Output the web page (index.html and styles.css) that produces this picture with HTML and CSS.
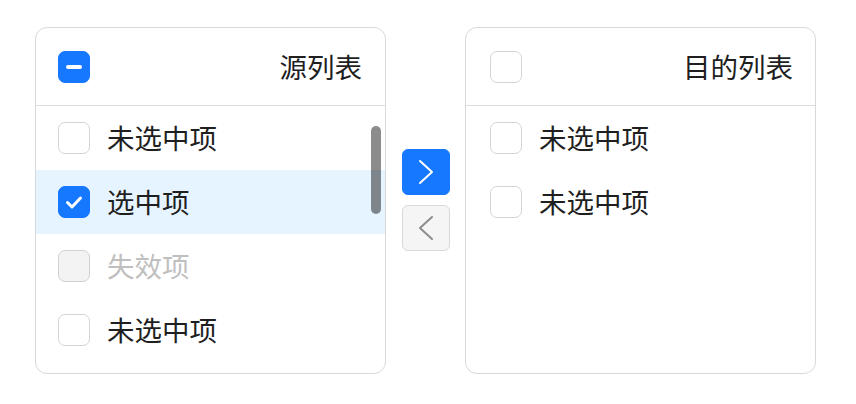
FILE: index.html
```html
<!DOCTYPE html>
<html lang="zh">
<head>
<meta charset="utf-8">
<link rel="stylesheet" href="styles.css">
</head>
<body>
<div class="transfer">
  <div class="panel">
    <div class="header">
      <span class="cb cb-ind"><span class="bar"></span></span>
      <span class="title">源列表</span>
    </div>
    <div class="list">
      <div class="item"><span class="cb"></span><span class="label">未选中项</span></div>
      <div class="item selected"><span class="cb cb-checked"><svg viewBox="0 0 32 32" width="32" height="32"><path d="M9.5 16.5 L14 21 L22.5 12" fill="none" stroke="#fff" stroke-width="3" stroke-linecap="round" stroke-linejoin="round"/></svg></span><span class="label">选中项</span></div>
      <div class="item disabled"><span class="cb cb-disabled"></span><span class="label">失效项</span></div>
      <div class="item"><span class="cb"></span><span class="label">未选中项</span></div>
      <div class="thumb"></div>
    </div>
  </div>
  <div class="ops">
    <button class="op op-primary"><svg viewBox="0 0 48 46" width="48" height="46"><path d="M18 12 L30 23 L18 34" fill="none" stroke="#fff" stroke-width="2" stroke-linecap="round" stroke-linejoin="round"/></svg></button>
    <button class="op op-disabled"><svg viewBox="0 0 48 46" width="48" height="46"><path d="M30 12 L18 23 L30 34" fill="none" stroke="#8c8c8c" stroke-width="2" stroke-linecap="round" stroke-linejoin="round"/></svg></button>
  </div>
  <div class="panel panel-right">
    <div class="header">
      <span class="cb"></span>
      <span class="title">目的列表</span>
    </div>
    <div class="list">
      <div class="item"><span class="cb"></span><span class="label">未选中项</span></div>
      <div class="item"><span class="cb"></span><span class="label">未选中项</span></div>
    </div>
  </div>
</div>
</body>
</html>
```
FILE: styles.css
```css
html, body {
  margin: 0;
  padding: 0;
  background: #fff;
}
body {
  font-family: "Noto Sans CJK SC", "Noto Sans", sans-serif;
  color: #1f1f1f;
}
.transfer {
  display: flex;
  align-items: center;
  padding: 27px 0 0 35px;
}
.panel {
  box-sizing: border-box;
  width: 351px;
  height: 347px;
  border: 1px solid #d9d9d9;
  border-radius: 12px;
  display: flex;
  flex-direction: column;
  overflow: hidden;
}
.header {
  box-sizing: border-box;
  height: 78px;
  flex: none;
  border-bottom: 1px solid #dcdcdc;
  display: flex;
  align-items: center;
  justify-content: space-between;
  padding: 0 23px 0 22px;
}
.panel-right .header {
  padding: 0 22px 0 24px;
}
.title {
  font-size: 27.5px;
  line-height: 1;
}
.list {
  flex: 1;
  position: relative;
  overflow: hidden;
}
.item {
  height: 64px;
  display: flex;
  align-items: center;
  gap: 17px;
  padding-left: 22px;
}
.panel-right .item {
  padding-left: 24px;
}
.label {
  font-size: 27.5px;
  line-height: 1;
}
.item.selected {
  background: #e6f4ff;
}
.item.disabled .label {
  color: #bfbfbf;
}
.cb {
  box-sizing: border-box;
  width: 32px;
  height: 32px;
  border: 1.5px solid #d4d4d4;
  border-radius: 7px;
  background: #fff;
  display: flex;
  align-items: center;
  justify-content: center;
  flex: none;
}
.cb-ind, .cb-checked {
  background: #1677ff;
  border-color: #1677ff;
}
.cb-checked svg {
  display: block;
  margin: -1.5px;
}
.bar {
  width: 16px;
  height: 4px;
  border-radius: 2px;
  background: #fff;
}
.cb-disabled {
  background: #f3f3f3;
  border-color: #d0d0d0;
}
.thumb {
  position: absolute;
  right: 4px;
  top: 20px;
  width: 10px;
  height: 88px;
  border-radius: 5px;
  background: rgba(0, 0, 0, 0.45);
}
.ops {
  display: flex;
  flex-direction: column;
  gap: 10px;
  margin: -2px 15px 0 16px;
}
.op {
  box-sizing: border-box;
  width: 48px;
  height: 46px;
  border-radius: 6px;
  padding: 0;
  display: block;
  border: 1px solid transparent;
}
.op svg {
  display: block;
  margin: -1px;
}
.op-primary {
  background: #1677ff;
  border-color: #1677ff;
}
.op-disabled {
  background: #f5f5f5;
  border-color: #d9d9d9;
}
```
